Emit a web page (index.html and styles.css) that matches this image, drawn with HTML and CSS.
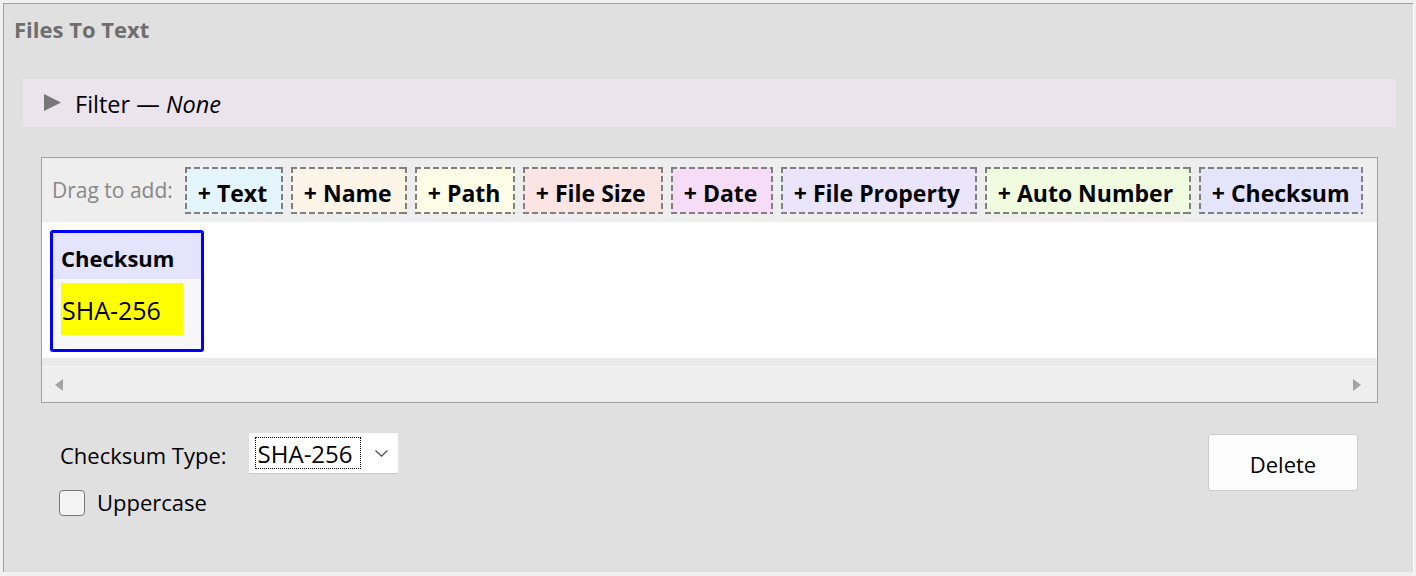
FILE: index.html
```html
<!DOCTYPE html>
<html lang="en">
<head>
<meta charset="utf-8">
<title>Files To Text</title>
<link rel="stylesheet" href="styles.css">
</head>
<body>
<div class="panel">
  <div class="title">Files To Text</div>

  <div class="filter">
    <svg class="tri" width="17" height="17" viewBox="0 0 17 17"><polygon points="0,0 17,8.5 0,17" fill="#777777"/></svg>
    <span class="filter-text">Filter — <i>None</i></span>
  </div>

  <div class="builder">
    <div class="toolbar">
      <span class="drag">Drag to add:</span>
      <span class="chip c-text">+ Text</span>
      <span class="chip c-name">+ Name</span>
      <span class="chip c-path">+ Path</span>
      <span class="chip c-size">+ File Size</span>
      <span class="chip c-date">+ Date</span>
      <span class="chip c-prop">+ File Property</span>
      <span class="chip c-auto">+ Auto Number</span>
      <span class="chip c-sum">+ Checksum</span>
    </div>
    <div class="canvas">
      <div class="card">
        <div class="card-head">Checksum</div>
        <div class="card-body"><span class="token">SHA-256</span></div>
      </div>
    </div>
    <div class="band"></div>
    <div class="hscroll">
      <svg width="8" height="12" viewBox="0 0 8 12"><polygon points="8,0 0,6 8,12" fill="#a3a3a3"/></svg>
      <svg width="8" height="12" viewBox="0 0 8 12"><polygon points="0,0 8,6 0,12" fill="#a3a3a3"/></svg>
    </div>
  </div>

  <div class="options">
    <div class="opt-left">
      <div class="opt-row">
        <span class="label">Checksum Type:</span>
        <div class="select">
          <span class="sel-value">SHA-256</span>
          <svg class="chev" width="13" height="7" viewBox="0 0 13 7"><polyline points="0.5,0.5 6.5,6.2 12.5,0.5" fill="none" stroke="#444" stroke-width="1.1"/></svg>
        </div>
      </div>
      <label class="check-row">
        <span class="checkbox"></span>
        <span class="label">Uppercase</span>
      </label>
    </div>
    <button class="delete">Delete</button>
  </div>
</div>
</body>
</html>
```

FILE: styles.css
```css
* { box-sizing: border-box; }
html, body {
  margin: 0;
  padding: 0;
  background: #f0f0f0;
  width: 1416px;
  height: 576px;
  overflow: hidden;
  font-family: "Open Sans", "Noto Sans", sans-serif;
  color: #000;
}
.panel {
  margin: 3px 2px 0 3px;
  height: 569px;
  background: #e0e0e0;
  border-top: 1px solid #a0a0a0;
  border-left: 1px solid #a0a0a0;
  border-right: 1px solid #ffffff;
  display: flex;
  flex-direction: column;
}
.title {
  padding: 13px 0 0 10px;
  height: 38px;
  font-size: 22px;
  line-height: 24px;
  font-weight: bold;
  color: #6e6e6e;
}
.filter {
  margin: 37px 17px 0 19px;
  height: 48px;
  background: #ece4ec;
  display: flex;
  align-items: center;
  padding-left: 21px;
  gap: 14px;
}
.tri {
  margin-top: -2px;
}
.filter-text {
  font-size: 23.5px;
  line-height: 28px;
  padding-top: 2px;
}
.builder {
  margin: 30px 35px 0 37px;
  height: 246px;
  border: 1px solid #a0a0a0;
  background: #ffffff;
  display: flex;
  flex-direction: column;
}
.toolbar {
  height: 64px;
  background: #eeeeee;
  display: flex;
  align-items: flex-start;
  padding: 9px 0 0 10px;
  gap: 8px;
}
.drag {
  font-size: 21px;
  color: #888888;
  height: 47px;
  line-height: 47px;
  margin-right: 4px;
}
.chip {
  --dash: #808080;
  flex: none;
  height: 47px;
  display: inline-flex;
  align-items: center;
  padding: 4px 0 0 13px;
  font-size: 23px;
  font-weight: bold;
  white-space: nowrap;
  background:
    repeating-linear-gradient(90deg, var(--dash) 0 6px, transparent 6px 9px) top left / 100% 2px no-repeat,
    repeating-linear-gradient(90deg, var(--dash) 0 6px, transparent 6px 9px) bottom left / 100% 2px no-repeat,
    repeating-linear-gradient(180deg, var(--dash) 0 6px, transparent 6px 9px) top left / 2px 100% no-repeat,
    repeating-linear-gradient(180deg, var(--dash) 0 6px, transparent 6px 9px) top right / 2px 100% no-repeat,
    var(--bg);
}
.c-text { --bg: #e3f4fb; width: 98px; }
.c-name { --bg: #fdf4e8; width: 116px; }
.c-path { --bg: #fefee8; width: 100px; }
.c-size { --bg: #fde4e4; width: 140px; }
.c-date { --bg: #f7dcf8; width: 102px; }
.c-prop { --bg: #eae5fb; width: 196px; }
.c-auto { --bg: #f0fbe0; width: 206px; }
.c-sum  { --bg: #e4e4fc; width: 164px; }

.canvas {
  height: 136px;
  background: #ffffff;
  padding: 8px 0 0 8px;
}
.card {
  width: 154px;
  height: 122px;
  border: 3px solid #0000ff;
  border-radius: 3px;
  background: #f7f7f7;
  display: flex;
  flex-direction: column;
}
.card-head {
  height: 46px;
  background: #e4e4fc;
  font-size: 22px;
  font-weight: bold;
  line-height: 46px;
  padding: 2px 0 0 8px;
}
.card-body {
  padding: 4px 0 0 8px;
}
.token {
  display: inline-block;
  width: 122px;
  height: 52px;
  background: #ffff00;
  font-size: 25px;
  line-height: 52px;
  padding: 1px 0 0 1px;
}
.band {
  height: 9px;
  background: #ebebeb;
  border-bottom: 1px solid #f7f7f7;
}
.hscroll {
  flex: 1;
  background: #eeeeee;
  display: flex;
  align-items: center;
  justify-content: space-between;
  padding: 0 16px 0 13px;
}
.options {
  margin: 30px 55px 0 56px;
  display: flex;
  justify-content: space-between;
  align-items: flex-start;
}
.opt-left {
  display: flex;
  flex-direction: column;
  gap: 15px;
}
.opt-row {
  display: flex;
  align-items: center;
  gap: 22px;
}
.label {
  font-size: 22px;
  line-height: 28px;
  padding-top: 3px;
}
.select {
  width: 149px;
  height: 41px;
  background: #ffffff;
  border-bottom: 1px solid #c9c9c9;
  display: flex;
  align-items: center;
  padding-left: 6px;
}
.sel-value {
  font-size: 24px;
  line-height: 30px;
  padding: 2px 0 0 3px;
  outline: 1px dotted #000;
  outline-offset: -1px;
  width: 106px;
}
.chev {
  margin-left: 14px;
}
.check-row {
  display: flex;
  align-items: center;
  gap: 12px;
  margin-left: -1px;
}
.check-row .label {
  padding-top: 0;
  margin-top: -1px;
}
.checkbox {
  width: 26px;
  height: 26px;
  border: 1px solid #777777;
  border-radius: 4px;
  background: #f3f3f3;
}
.delete {
  margin-top: 1px;
  width: 150px;
  height: 57px;
  background: #fdfdfd;
  border: 1px solid #cccccc;
  border-radius: 3px;
  font-family: inherit;
  font-size: 22px;
  padding-top: 4px;
  color: #000;
}
```
